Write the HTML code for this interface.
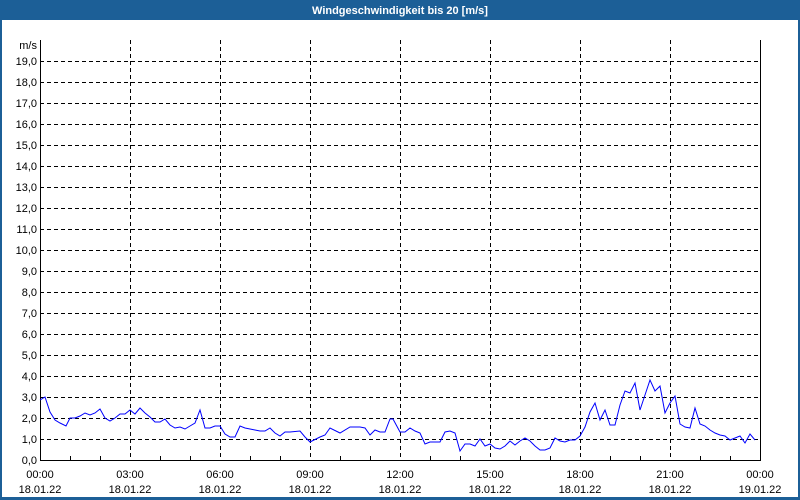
<!DOCTYPE html>
<html><head><meta charset="utf-8"><style>
html,body{margin:0;padding:0;width:800px;height:500px;overflow:hidden;background:#fff}
svg{display:block}
text{font-family:"Liberation Sans",sans-serif;font-size:11px;fill:#000}
</style></head><body>
<svg width="800" height="500" xmlns="http://www.w3.org/2000/svg">
<rect x="0" y="0" width="800" height="500" fill="#1c5f97"/>
<rect x="2" y="20" width="796" height="477" fill="#fff"/>
<text x="400" y="14" text-anchor="middle" style="fill:#fff;font-weight:bold;font-size:11px">Windgeschwindigkeit bis 20 [m/s]</text>
<g stroke="#000" stroke-width="1" stroke-dasharray="4,3" fill="none" shape-rendering="crispEdges">
<path d="M40 439.5H760M40 418.5H760M40 397.5H760M40 376.5H760M40 355.5H760M40 334.5H760M40 313.5H760M40 292.5H760M40 271.5H760M40 250.5H760M40 229.5H760M40 208.5H760M40 187.5H760M40 166.5H760M40 145.5H760M40 124.5H760M40 103.5H760M40 82.5H760M40 61.5H760"/>
<path d="M130.5 40V460M220.5 40V460M310.5 40V460M400.5 40V460M490.5 40V460M580.5 40V460M670.5 40V460"/>
</g>
<g stroke="#000" stroke-width="1" fill="none" shape-rendering="crispEdges">
<path d="M40.5 40V460.5H760.5V40"/>
<path d="M70.5 456V460M100.5 456V460M160.5 456V460M190.5 456V460M250.5 456V460M280.5 456V460M340.5 456V460M370.5 456V460M430.5 456V460M460.5 456V460M520.5 456V460M550.5 456V460M610.5 456V460M640.5 456V460M700.5 456V460M730.5 456V460"/>
</g>
<g text-anchor="end">
<text x="37" y="49">m/s</text>
<text x="37" y="65">19,0</text><text x="37" y="86">18,0</text><text x="37" y="107">17,0</text><text x="37" y="128">16,0</text><text x="37" y="149">15,0</text><text x="37" y="170">14,0</text><text x="37" y="191">13,0</text><text x="37" y="212">12,0</text><text x="37" y="233">11,0</text><text x="37" y="254">10,0</text><text x="37" y="275">9,0</text><text x="37" y="296">8,0</text><text x="37" y="317">7,0</text><text x="37" y="338">6,0</text><text x="37" y="359">5,0</text><text x="37" y="380">4,0</text><text x="37" y="401">3,0</text><text x="37" y="422">2,0</text><text x="37" y="443">1,0</text><text x="37" y="464">0,0</text>
</g>
<g text-anchor="middle">
<text x="40" y="478">00:00</text><text x="40" y="493">18.01.22</text>
<text x="130" y="478">03:00</text><text x="130" y="493">18.01.22</text>
<text x="220" y="478">06:00</text><text x="220" y="493">18.01.22</text>
<text x="310" y="478">09:00</text><text x="310" y="493">18.01.22</text>
<text x="400" y="478">12:00</text><text x="400" y="493">18.01.22</text>
<text x="490" y="478">15:00</text><text x="490" y="493">18.01.22</text>
<text x="580" y="478">18:00</text><text x="580" y="493">18.01.22</text>
<text x="670" y="478">21:00</text><text x="670" y="493">18.01.22</text>
<text x="760" y="478">00:00</text><text x="760" y="493">19.01.22</text>
</g>
<polyline fill="none" stroke="#0000ff" stroke-width="1" points="40,400 45,397 50,412 55,420 60,423 66,426 70,418 75,418 80,416 85,413 90,415 95,413 100,409 105,418 110,421 115,418 120,414 125,414 130,410 135,414 140,408 145,413 150,417 155,422 160,422 165,419 170,425 175,428 180,427 185,429 190,426 195,423 200,410 205,428 210,428 215,426 220,426 225,434 230,437 235,437 240,426 245,428 250,429 255,430 260,431 265,431 270,428 275,433 280,436 285,432 290,432 300,431 305,437 310,442 320,437 325,435 330,428 340,433 350,427 360,427 365,428 370,435 375,430 380,432 385,432 390,419 393,419 400,432 405,432 410,428 415,431 420,433 425,444 430,442 440,442 445,432 450,431 455,433 460,451 465,444 470,444 475,446 480,439 485,446 490,444 495,448 500,449 505,446 510,441 515,445 520,441 525,438 530,441 535,446 540,450 545,450 550,448 555,438 560,441 565,442 570,440 575,440 580,436 585,427 590,412 595,403 600,420 605,410 610,425 615,425 620,405 625,391 630,393 635,383 640,410 645,395 650,380 655,391 660,386 665,413 670,403 675,396 680,424 685,427 690,428 695,408 700,424 705,426 710,430 715,433 720,435 725,436 730,440 735,438 740,436 745,443 750,434 755,440"/>
</svg>
</body></html>
